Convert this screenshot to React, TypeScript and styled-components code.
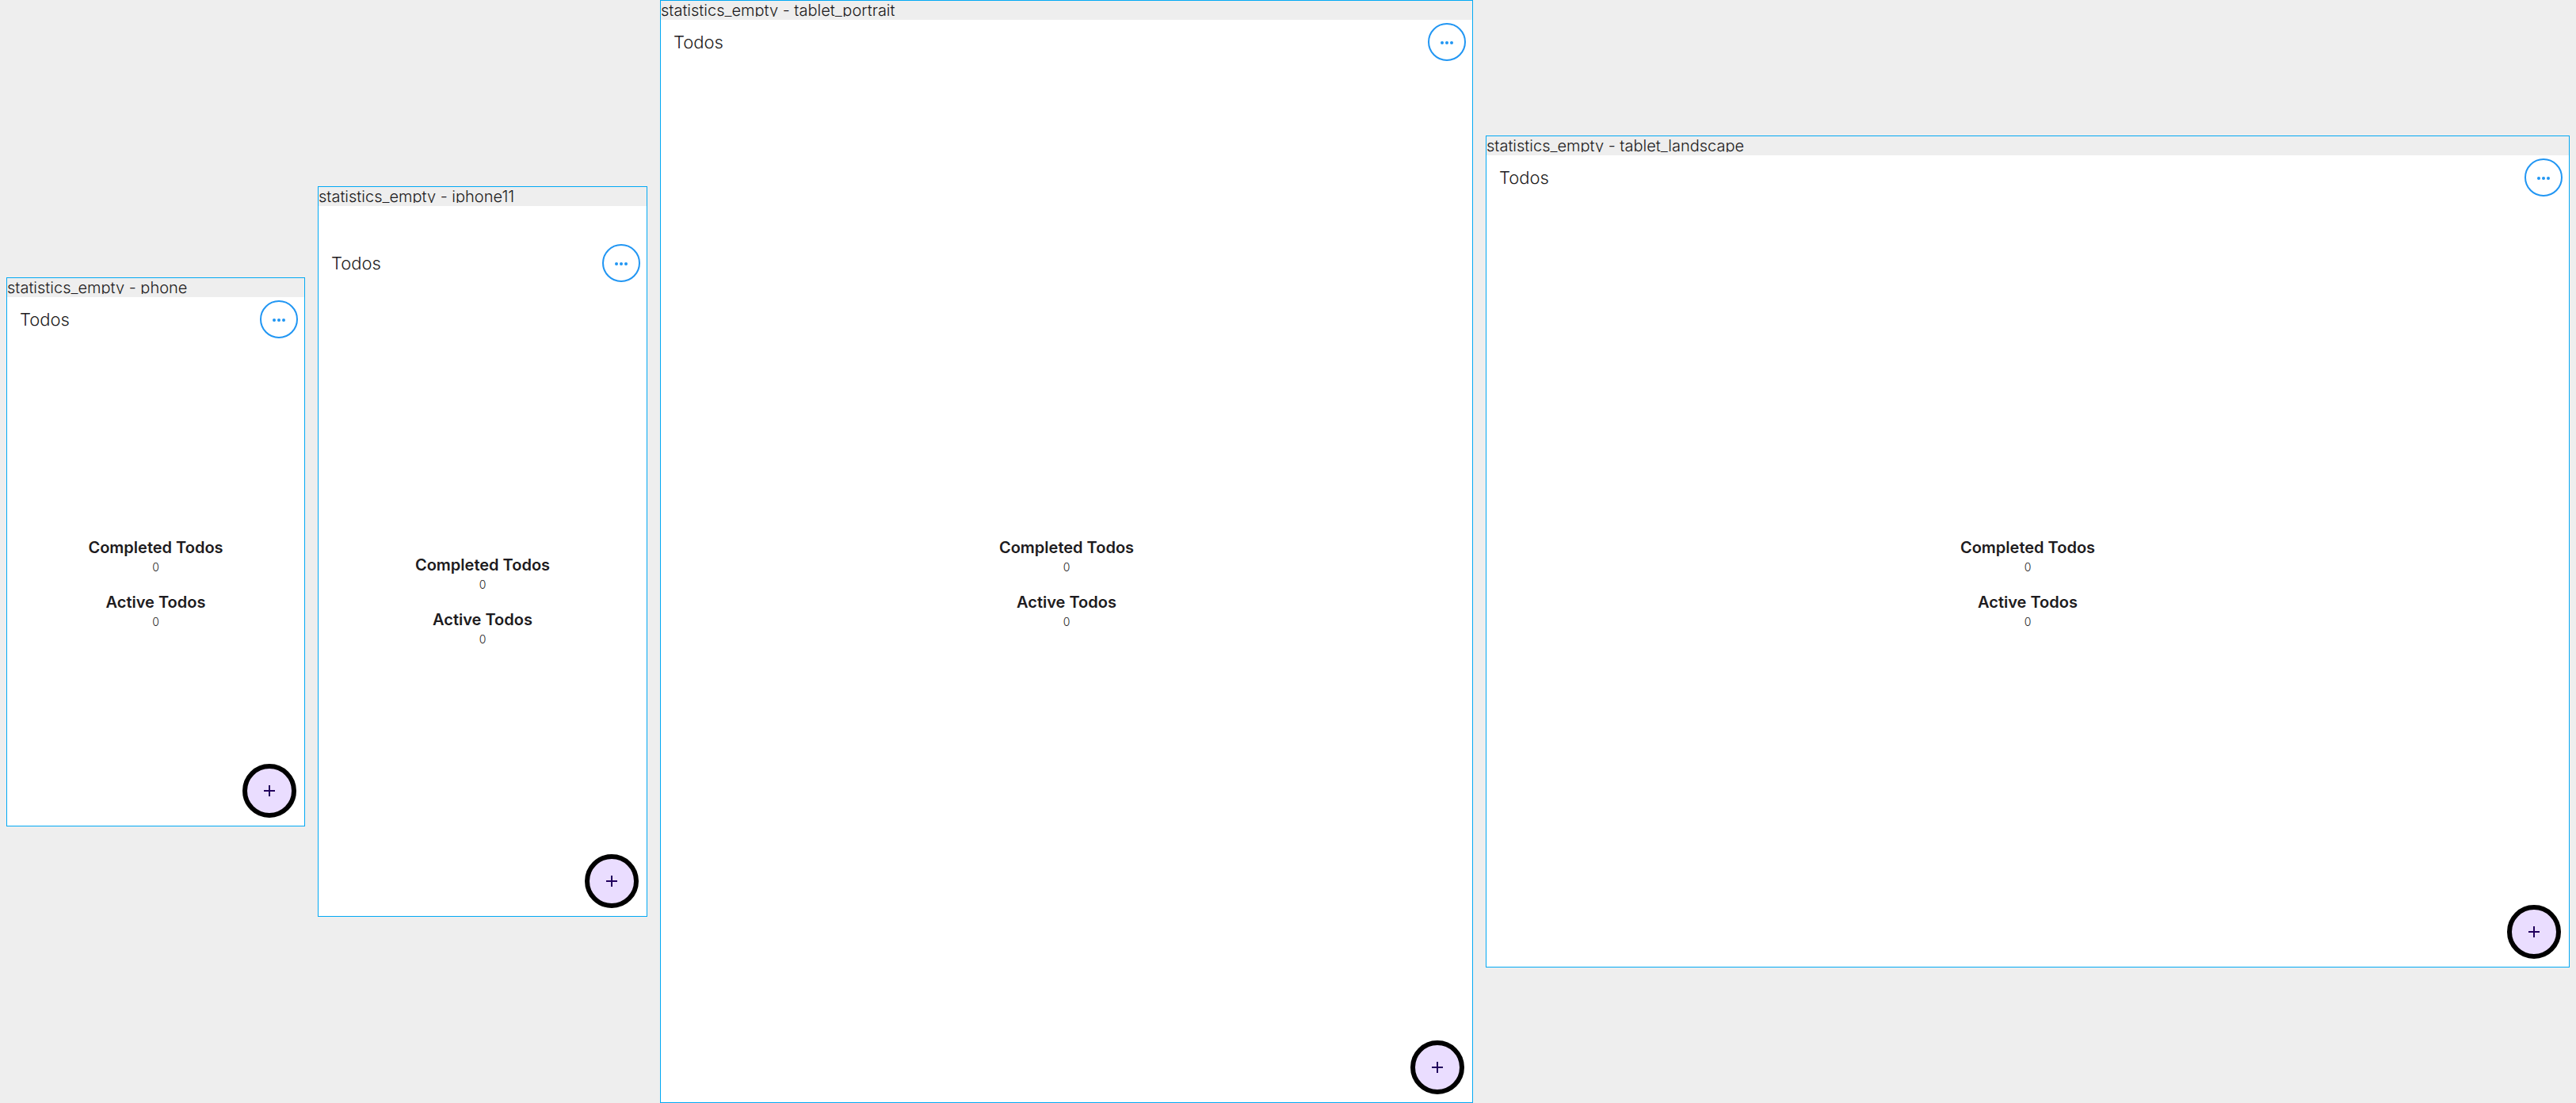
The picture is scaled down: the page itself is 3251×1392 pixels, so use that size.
import React from "react";
import styled, { createGlobalStyle } from "styled-components";

const GlobalStyle = createGlobalStyle`
  *, *::before, *::after { box-sizing: border-box; }
  body {
    margin: 0;
    background: #eeeeee;
    color: #1d1b20;
    font-family: Inter, "Liberation Sans", sans-serif;
  }
`;

interface Device {
  name: string;
  width: number;
  height: number;
  safeTop?: number;
}

const devices: Device[] = [
  { name: "phone", width: 375, height: 667 },
  { name: "iphone11", width: 414, height: 896, safeTop: 44 },
  { name: "tablet_portrait", width: 1024, height: 1366 },
  { name: "tablet_landscape", width: 1366, height: 1024 },
];

const stats = [
  { label: "Completed Todos", value: 0 },
  { label: "Active Todos", value: 0 },
];

const FRAME_BORDER = 1;

const Board = styled.main`
  display: grid;
  grid-template-columns: ${devices
    .map((d) => `minmax(0, ${d.width + 2 * FRAME_BORDER}fr)`)
    .join(" ")};
  align-items: center;
  gap: 16px;
  min-height: 100vh;
  padding: 0 8px;
`;

const Frame = styled.section`
  border: ${FRAME_BORDER}px solid #03a9f4;
`;

const Caption = styled.header`
  height: 24px;
  padding-bottom: 4px;
  background: #eeeeee;
`;

const CaptionText = styled.h2`
  height: 20px;
  margin: 0;
  overflow: hidden;
  font-size: 20px;
  font-weight: 300;
  line-height: 24px;
  white-space: nowrap;
`;

const Screen = styled.div<{ $width: number; $height: number; $safeTop: number }>`
  display: flex;
  flex-direction: column;
  aspect-ratio: ${(p) => p.$width} / ${(p) => p.$height};
  padding-top: ${(p) => p.$safeTop}px;
  background: #ffffff;
`;

const AppBar = styled.div`
  display: flex;
  flex: none;
  align-items: center;
  justify-content: space-between;
  height: 56px;
  padding: 0 8px 0 16px;
`;

const AppTitle = styled.h1`
  margin: 0;
  font-size: 22px;
  font-weight: 300;
  line-height: 28px;
`;

const MenuButton = styled.button`
  display: grid;
  place-items: center;
  width: 48px;
  height: 48px;
  padding: 0;
  border: 2px solid #2196f3;
  border-radius: 50%;
  background: transparent;
  color: #2196f3;
`;

const Body = styled.div`
  position: relative;
  display: flex;
  flex: 1;
  align-items: center;
  justify-content: center;
`;

const Stats = styled.dl`
  display: grid;
  gap: 24px;
  margin: 0;
  text-align: center;
`;

const Stat = styled.div`
  display: grid;
  gap: 4px;
`;

const StatLabel = styled.dt`
  font-size: 20px;
  font-weight: 600;
  line-height: 24px;
`;

const StatValue = styled.dd`
  margin: 0;
  font-size: 14px;
  font-weight: 300;
  line-height: 17px;
`;

const AddButton = styled.button`
  position: absolute;
  right: 10px;
  bottom: 10px;
  display: grid;
  place-items: center;
  width: 68px;
  height: 68px;
  padding: 0;
  border: 6px solid #000000;
  border-radius: 50%;
  background: #eaddff;
  color: #21005d;
`;

const MoreIcon = () => (
  <svg width="24" height="24" viewBox="0 0 24 24" fill="currentColor" aria-hidden="true">
    <circle cx="6" cy="13" r="2" />
    <circle cx="12" cy="13" r="2" />
    <circle cx="18" cy="13" r="2" />
  </svg>
);

const PlusIcon = () => (
  <svg width="24" height="24" viewBox="0 0 24 24" fill="currentColor" aria-hidden="true">
    <path d="M19 13h-6v6h-2v-6H5v-2h6V5h2v6h6v2z" />
  </svg>
);

const DeviceFrame = ({ name, width, height, safeTop = 0 }: Device) => (
  <Frame>
    <Caption>
      <CaptionText>statistics_empty - {name}</CaptionText>
    </Caption>
    <Screen $width={width} $height={height} $safeTop={safeTop}>
      <AppBar>
        <AppTitle>Todos</AppTitle>
        <MenuButton type="button" aria-label="Show menu">
          <MoreIcon />
        </MenuButton>
      </AppBar>
      <Body>
        <Stats>
          {stats.map((stat) => (
            <Stat key={stat.label}>
              <StatLabel>{stat.label}</StatLabel>
              <StatValue>{stat.value}</StatValue>
            </Stat>
          ))}
        </Stats>
        <AddButton type="button" aria-label="Add todo">
          <PlusIcon />
        </AddButton>
      </Body>
    </Screen>
  </Frame>
);

export default function App() {
  return (
    <>
      <GlobalStyle />
      <Board>
        {devices.map((device) => (
          <DeviceFrame key={device.name} {...device} />
        ))}
      </Board>
    </>
  );
}
